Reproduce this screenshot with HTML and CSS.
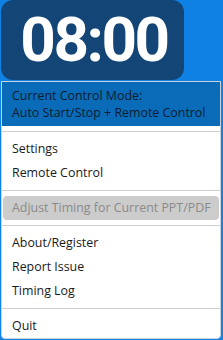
FILE: index.html
```html
<!DOCTYPE html>
<html>
<head>
<meta charset="utf-8">
<link rel="stylesheet" href="styles.css">
</head>
<body>
<div class="timer"><span class="time">08:00</span></div>
<div class="menu">
  <div class="mode">
    <div>Current Control Mode:</div>
    <div>Auto Start/Stop + Remote Control</div>
  </div>
  <div class="sep"></div>
  <div class="item">Settings</div>
  <div class="item">Remote Control</div>
  <div class="sep"></div>
  <div class="item disabled">Adjust Timing for Current PPT/PDF</div>
  <div class="sep"></div>
  <div class="item">About/Register</div>
  <div class="item">Report Issue</div>
  <div class="item">Timing Log</div>
  <div class="sep"></div>
  <div class="item">Quit</div>
</div>
</body>
</html>
```
FILE: styles.css
```css
html, body {
  margin: 0;
  padding: 0;
}
body {
  width: 223px;
  height: 340px;
  overflow: hidden;
  background: linear-gradient(180deg, #0f80e4 0%, #1284e6 100%);
  font-family: "Open Sans", "Noto Sans", sans-serif;
}
.timer {
  margin-left: 1px;
  width: 183px;
  height: 80px;
  background: #134577;
  border-radius: 12px;
  display: flex;
  align-items: center;
  justify-content: center;
}
.time {
  color: #ffffff;
  font-family: Roboto, sans-serif;
  font-weight: 700;
  font-size: 62px;
  letter-spacing: -2.5px;
  line-height: 74px;
  padding: 0 0 0 3px;
}
.menu {
  margin-top: 1px;
  margin-left: 1px;
  width: 218px;
  height: 256px;
  background: #ffffff;
  border: 1px solid #c9d3dd;
  border-radius: 0 0 4px 4px;
  color: #1a1a1a;
  font-size: 12.4px;
}
.mode {
  height: 44px;
  box-sizing: border-box;
  padding: 5px 10px;
  background: #0a6bb8;
  color: #0c1c30;
  line-height: 17px;
}
.sep {
  height: 1px;
  margin: 5px 0;
  background: #cfcfcf;
}
.item {
  height: 24px;
  line-height: 24px;
  padding-left: 10px;
  white-space: nowrap;
}
.item.disabled {
  margin: 0 1px;
  padding-left: 9px;
  background: #cccccc;
  color: #8a8a8a;
  border-radius: 4px;
}
```
